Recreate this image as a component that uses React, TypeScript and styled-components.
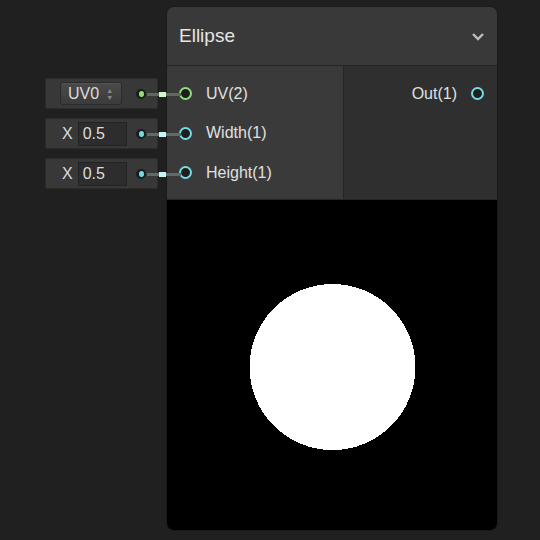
import React from 'react';
import styled, { createGlobalStyle } from 'styled-components';

const GlobalStyle = createGlobalStyle`
  html, body {
    margin: 0;
    padding: 0;
    background: #202020;
  }
  body {
    font-family: 'Liberation Sans', Arial, sans-serif;
    color: #e2e2e2;
  }
`;

const Page = styled.div`
  display: flex;
  align-items: flex-start;
  width: 540px;
  height: 540px;
  padding: 6px 0 0 45px;
  box-sizing: border-box;
`;

const InputColumn = styled.div`
  display: flex;
  flex-direction: column;
  gap: 9px;
  width: 121px;
  padding-top: 72px;
`;

const InputRow = styled.div`
  position: relative;
  display: flex;
  align-items: center;
  width: 113px;
  height: 31px;
  padding-left: 14px;
  box-sizing: border-box;
  background: #383838;
  border: 1px solid #2c2c2c;
  border-radius: 2px;
  font-size: 16px;
  color: #dcdcdc;
`;

const Dropdown = styled.div`
  display: flex;
  align-items: center;
  gap: 7px;
  height: 23px;
  padding: 0 8px 0 7px;
  box-sizing: border-box;
  background: linear-gradient(#4a4a4a, #3b3b3b);
  border: 1px solid #2a2a2a;
  border-radius: 3px;
  box-shadow: inset 0 1px 0 rgba(255, 255, 255, 0.06);
`;

const Stepper = styled.span`
  display: flex;
  flex-direction: column;
  align-items: center;
  gap: 2px;
  font-size: 7px;
  line-height: 5px;
  color: #8a8a8a;
`;

const AxisLabel = styled.span`
  margin-right: 5px;
  margin-left: 2px;
`;

const FloatField = styled.div`
  display: flex;
  align-items: center;
  width: 49px;
  height: 24px;
  padding-left: 4px;
  box-sizing: border-box;
  background: #2d2d2d;
  border: 1px solid #232323;
`;

const Dot = styled.span<{ $color: string }>`
  position: absolute;
  right: 11px;
  top: 50%;
  width: 10px;
  height: 10px;
  margin-top: -5px;
  border-radius: 50%;
  background: #1c1c1c;
  display: flex;
  align-items: center;
  justify-content: center;
  &::after {
    content: '';
    width: 5px;
    height: 6px;
    border-radius: 50%;
    background: ${(p) => p.$color};
  }
`;

const Wire = styled.span<{ $color: string; $light: string }>`
  position: absolute;
  left: 101px;
  top: 50%;
  width: 34px;
  height: 3px;
  margin-top: -1px;
  background: ${(p) => p.$color};
  z-index: 2;
  &::after {
    content: '';
    position: absolute;
    left: 12px;
    top: -1px;
    width: 7px;
    height: 5px;
    background: ${(p) => p.$light};
  }
`;

const Node = styled.div`
  display: flex;
  flex-direction: column;
  width: 332px;
  height: 525px;
  background: #2e2e2e;
  border: 1px solid #1a1a1a;
  border-radius: 8px;
  overflow: hidden;
  box-sizing: border-box;
`;

const Header = styled.div`
  display: flex;
  align-items: center;
  justify-content: space-between;
  height: 59px;
  flex-shrink: 0;
  padding: 0 12px;
  box-sizing: border-box;
  background: #393939;
  border-bottom: 1px solid #262626;
  font-size: 19px;
  color: #e6e6e6;
`;

const Ports = styled.div`
  display: grid;
  grid-template-columns: 177px 1fr;
  height: 134px;
  flex-shrink: 0;
  box-sizing: border-box;
  border-bottom: 1px solid #262626;
`;

const PortColumn = styled.div<{ $side: 'in' | 'out' }>`
  display: flex;
  flex-direction: column;
  padding-top: 8px;
  background: ${(p) => (p.$side === 'in' ? '#3a3a3a' : '#2f2f2f')};
  border-right: ${(p) => (p.$side === 'in' ? '1px solid #262626' : 'none')};
`;

const PortRow = styled.div<{ $side: 'in' | 'out' }>`
  display: flex;
  align-items: center;
  flex-direction: ${(p) => (p.$side === 'in' ? 'row' : 'row-reverse')};
  gap: 14px;
  height: 39.5px;
  padding: ${(p) => (p.$side === 'in' ? '0 0 0 12px' : '0 13px 0 0')};
  font-size: 16px;
  color: #e0e0e0;
`;

const PortRing = styled.span<{ $color: string }>`
  width: 9px;
  height: 9px;
  border: 2px solid ${(p) => p.$color};
  border-radius: 50%;
  background: #1e1e1e;
  flex-shrink: 0;
`;

const Preview = styled.div`
  flex: 1;
  background: #000;
  display: flex;
`;

const GREEN = '#8fe07d';
const CYAN = '#72dde2';

const inputs = [
  { kind: 'uv', port: 'UV(2)', color: GREEN, wire: '#5c6b5a', light: '#d2f3cb' },
  { kind: 'float', port: 'Width(1)', color: CYAN, wire: '#5a6c6d', light: '#c9f3f4' },
  { kind: 'float', port: 'Height(1)', color: CYAN, wire: '#5a6c6d', light: '#c9f3f4' },
];

function Chevron() {
  return (
    <svg width="14" height="9" viewBox="0 0 14 9">
      <path d="M2 2 L7 7 L12 2" fill="none" stroke="#bdbdbd" strokeWidth="2.4" />
    </svg>
  );
}

export default function App() {
  return (
    <>
      <GlobalStyle />
      <Page>
        <InputColumn>
          {inputs.map((item) => (
            <InputRow key={item.port}>
              {item.kind === 'uv' ? (
                <Dropdown>
                  UV0
                  <Stepper>
                    <span>▲</span>
                    <span>▼</span>
                  </Stepper>
                </Dropdown>
              ) : (
                <>
                  <AxisLabel>X</AxisLabel>
                  <FloatField>0.5</FloatField>
                </>
              )}
              <Dot $color={item.color} />
              <Wire $color={item.wire} $light={item.light} />
            </InputRow>
          ))}
        </InputColumn>
        <Node>
          <Header>
            Ellipse
            <Chevron />
          </Header>
          <Ports>
            <PortColumn $side="in">
              {inputs.map((item) => (
                <PortRow $side="in" key={item.port}>
                  <PortRing $color={item.color} />
                  {item.port}
                </PortRow>
              ))}
            </PortColumn>
            <PortColumn $side="out">
              <PortRow $side="out">
                <PortRing $color={CYAN} />
                Out(1)
              </PortRow>
            </PortColumn>
          </Ports>
          <Preview>
            <svg width="330" height="330" viewBox="0 0 64 64" shapeRendering="crispEdges">
              <circle cx="32.1" cy="32.4" r="16.1" fill="#fff" />
            </svg>
          </Preview>
        </Node>
      </Page>
    </>
  );
}
